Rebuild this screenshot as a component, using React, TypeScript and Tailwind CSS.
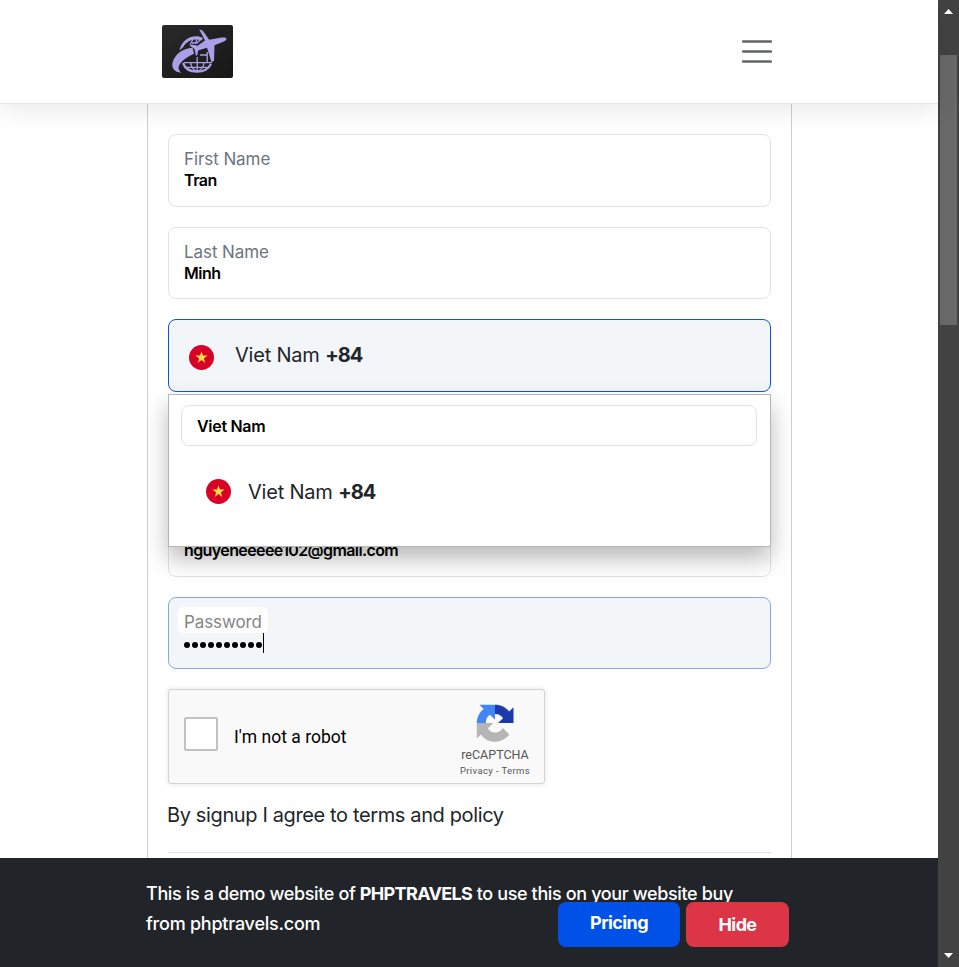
import React from "react";

function Flag() {
  return (
    <svg width="25" height="25" viewBox="0 0 25 25" className="shrink-0">
      <circle cx="12.5" cy="12.5" r="12.5" fill="#d80027" />
      <path d="M12.5 6.2l1.500 4.400h4.600l-3.700 2.800 1.400 4.500-3.800-2.800-3.800 2.800 1.400-4.500-3.700-2.800H11z" fill="#ffda44" />
    </svg>
  );
}

function Logo() {
  return (
    <svg width="71" height="53" viewBox="0 0 71 53">
      <defs>
        <linearGradient id="bg" x1="0" y1="0" x2="1" y2="1">
          <stop offset="0" stopColor="#292929" />
          <stop offset="1" stopColor="#171717" />
        </linearGradient>
      </defs>
      <rect width="71" height="53" rx="2" fill="url(#bg)" />
      <g fill="#ab9fe8">
        <path d="M17.500 25.500C19 17 26 11.500 34 11.300c2.500 0 5 .6 6.800 1.700l-1 2.500c-4.500-1.500-9-1.500-13 .8-2.300 1.500-4 3-5.300 5.500z" />
        <path d="M30.500 22.800C20.500 23.500 13 29.500 10.700 37c-1.500 5.500 1.300 10.300 8.500 10.700-4.200-3.700-3-7.700 1.300-11.700 3.500-3.300 7-5.300 11.500-7.300z" />
        <path d="M37.200 4.500c2 0 3.500.8 4.500 2.500l5.500 7.800 12.300-2.300c3-.3 5 .2 5 1.300 0 1.300-2 2.700-4.500 3.500l-7.500 3-.5 15.500-2.500 1.500-4.500-14.500-9 2.700-.5 4-1.500 1.500-1.500-7-5-3.500 2-1 6 1.200 7.500-5.200z" />
      </g>
      <g fill="none" stroke="#ab9fe8" strokeWidth="1.300">
        <path d="M21 38c2 5.500 7.500 8.700 14 8.700 6.500 0 11.500-3 14-7.700" strokeWidth="2.200" />
        <path d="M22 37.700h28M28.500 38c1 4 3 7 6.500 8.500 4-1.500 6.500-4.500 7-8.500M35.200 32v14M24.500 42.300h21M38 30h7M45.200 27v10" />
        <path d="M28 19.500l3.500-6M35 12.500l-1 5M30 18h5l4-4" />
      </g>
    </svg>
  );
}

function Field({ label, value, className }: { label: string; value: string; className: string }) {
  return (
    <div className={`rounded-[8px] border border-[#dfe2e8] bg-white px-[15px] pt-[14px] ${className}`}>
      <div className="h-[20px] text-[17px] leading-[21px] tracking-[-0.080px] text-[#6c757d]">{label}</div>
      <div className="text-[16px] font-semibold leading-[22px] tracking-[-0.500px] text-black">{value}</div>
    </div>
  );
}

function Country() {
  return (
    <span className="text-[20px] leading-[28px] text-[#212529]">
      <span className="tracking-[-0.200px]">Viet Nam </span>
      <b className="font-bold tracking-[-1px]">+84</b>
    </span>
  );
}

function Recaptcha() {
  return (
    <div className="mt-[20px] flex h-[95px] w-[377px] shrink-0 rounded-[3px] border border-[#d3d3d3] bg-[#f9f9f9] font-[Roboto,sans-serif] shadow-[0_0_4px_1px_rgba(0,0,0,0.08)]">
      <div className="ml-[15px] mt-[27px] h-[34px] w-[34px] shrink-0 rounded-[2px] border-2 border-[#c1c1c1] bg-white" />
      <div className="ml-[16px] mt-[36px] w-[220px] text-[17.500px] leading-[22px] text-black">
        <span className="tracking-[0.030px]">I'm not a robot</span>
      </div>
      <div className="flex w-[82px] flex-col items-center text-[#555]">
        <svg width="38" height="38" viewBox="0 0 38 38" className="mt-[14px] shrink-0">
          <path d="M37.500 19V3.300l-4.300 4.300C29.700 3.300 25 .8 19 .8v9.100c4 0 6.500 1.700 8 4.300l-5 4.800z" fill="#1c3aa9" />
          <path d="M19 .8H3.500l4.200 4.300C3.300 8.500.8 13.500.8 19h9c0-4 1.600-6.600 4.200-8.200l5 5z" fill="#4285f4" />
          <path d="M.8 19v15.600l4-4.200C8.300 35 13 37.700 19 37.700c5.800 0 11-2.700 14.300-7.200l-6.600-6.600c-1.500 2.800-4 4.400-7 4.600-3.700.2-6.300-1-7.700-4.300l5.200-5.200z" fill="#b5b5b5" />
        </svg>
        <div className="mt-[5px] whitespace-nowrap text-[12.500px] leading-[15px]">reCAPTCHA</div>
        <div className="mt-[2px] whitespace-nowrap text-[9.500px] leading-[14px] tracking-[0.380px]">Privacy - Terms</div>
      </div>
    </div>
  );
}

export default function App() {
  return (
    <div className="flex h-[967px] w-[959px] overflow-hidden bg-white font-[Inter,sans-serif]">
      <div className="flex w-[938px] flex-col">
        <header className="relative z-10 flex h-[104px] shrink-0 items-center justify-between border-b border-[#e3e3e3] bg-white pl-[162px] pr-[166px] shadow-[0_6px_24px_rgba(0,0,0,0.09)]">
          <Logo />
          <svg width="30" height="25" viewBox="0 0 30 25" stroke="#62646a" strokeWidth="2.300" strokeLinecap="round">
            <path d="M1 2.500h28M1 12.500h28M1 22.500h28" />
          </svg>
        </header>
        <main className="ml-[147px] flex h-[754px] w-[645px] shrink-0 flex-col overflow-visible border-x border-[#cfcfcf] px-[20px] pt-[30px]">
          <Field label="First Name" value="Tran" className="h-[73px] shrink-0" />
          <Field label="Last Name" value="Minh" className="mt-[20px] h-[72px] shrink-0" />
          <div className="relative mt-[20px] flex h-[73px] shrink-0 rounded-[8px] border border-[#0d55df] bg-[#f3f6f9] pl-[20px]">
            <div className="mt-[25px]"><Flag /></div>
            <div className="ml-[21px] mt-[21px]"><Country /></div>
            <div className="absolute left-[-1px] top-[74px] z-10 h-[153px] w-[603px] border border-[#b5b5b5] bg-white px-[12px] pt-[10px] shadow-[0_12px_22px_rgba(0,0,0,0.27)]">
              <div className="h-[41px] w-[576px] rounded-[8px] border border-[#dfe2e8] px-[15px] text-[16px] font-semibold leading-[41px] text-black">
                <span className="tracking-[-0.300px]">Viet Nam</span>
              </div>
              <div className="flex pl-[25px]">
                <div className="mt-[33px]"><Flag /></div>
                <div className="ml-[17px] mt-[32px]"><Country /></div>
              </div>
            </div>
          </div>
          <div className="mt-[20px] h-[72px] shrink-0 rounded-[8px] border border-[#dfe2e8]" />
          <div className="mt-[21px] h-[72px] shrink-0 rounded-[8px] border border-[#dfe2e8] px-[15px] pt-[33px] text-[16px] font-semibold leading-[22px] text-black">
            <span className="tracking-[-0.600px]">nguyeneeeee102@gmail.com</span>
          </div>
          <div className="mt-[20px] h-[72px] shrink-0 rounded-[8px] border border-[#86a9e8] bg-[#f3f6f9] px-[9px] pt-[9px]">
            <div className="h-[26px] w-[90px] rounded-[6px] bg-white pl-[6px] pt-[5px] text-[17px] leading-[21px] tracking-[-0.100px] text-[#858585]">Password</div>
            <div className="flex h-[20px] items-center pl-[6px]">
              <div className="flex gap-[2px]">
                {Array.from({ length: 10 }, (_, i) => (
                  <span key={i} className="mt-[3px] h-[6px] w-[6px] rounded-full bg-black" />
                ))}
              </div>
              <span className="ml-[1px] h-[20px] w-px bg-black" />
            </div>
          </div>
          <Recaptcha />
          <div className="ml-[-1px] mt-[16px] h-[30px] shrink-0 text-[20px] leading-[30px] text-[#212529]">
            <span className="whitespace-nowrap tracking-[-0.370px]">By signup I agree to terms and policy</span>
          </div>
          <div className="mt-[22px] h-px shrink-0 bg-[#e2e2e2]" />
        </main>
        <footer className="relative z-10 h-[109px] shrink-0 bg-[#212529] pl-[146px] pt-[21px] text-[18px] font-medium leading-[30px] text-white">
          <div className="whitespace-nowrap tracking-[-0.370px]">This is a demo website of <b className="font-bold tracking-[-0.650px]">PHPTRAVELS</b> to use this on your website buy</div>
          <div className="whitespace-nowrap tracking-[-0.230px]">from phptravels.com</div>
          <div className="absolute left-[558px] top-[44px] flex gap-[6px] text-center font-bold leading-[44px] tracking-[-0.600px]">
            <div className="h-[45px] w-[122px] rounded-[8px] bg-[#0051e8] leading-[42px]">Pricing</div>
            <div className="h-[45px] w-[103px] rounded-[8px] bg-[#dc3545] leading-[46px]">Hide</div>
          </div>
        </footer>
      </div>
      <div className="flex w-[21px] flex-col items-center bg-[#424242]">
        <svg width="9" height="5" viewBox="0 0 9 5" className="mt-[9px]"><path d="M4.500 0L9 5H0z" fill="#fff" /></svg>
        <div className="mt-[41px] h-[270px] w-[17px] bg-[#686868]" />
        <svg width="9" height="5" viewBox="0 0 9 5" className="mb-[9px] mt-auto"><path d="M0 0h9L4.500 5z" fill="#fff" /></svg>
      </div>
    </div>
  );
}
